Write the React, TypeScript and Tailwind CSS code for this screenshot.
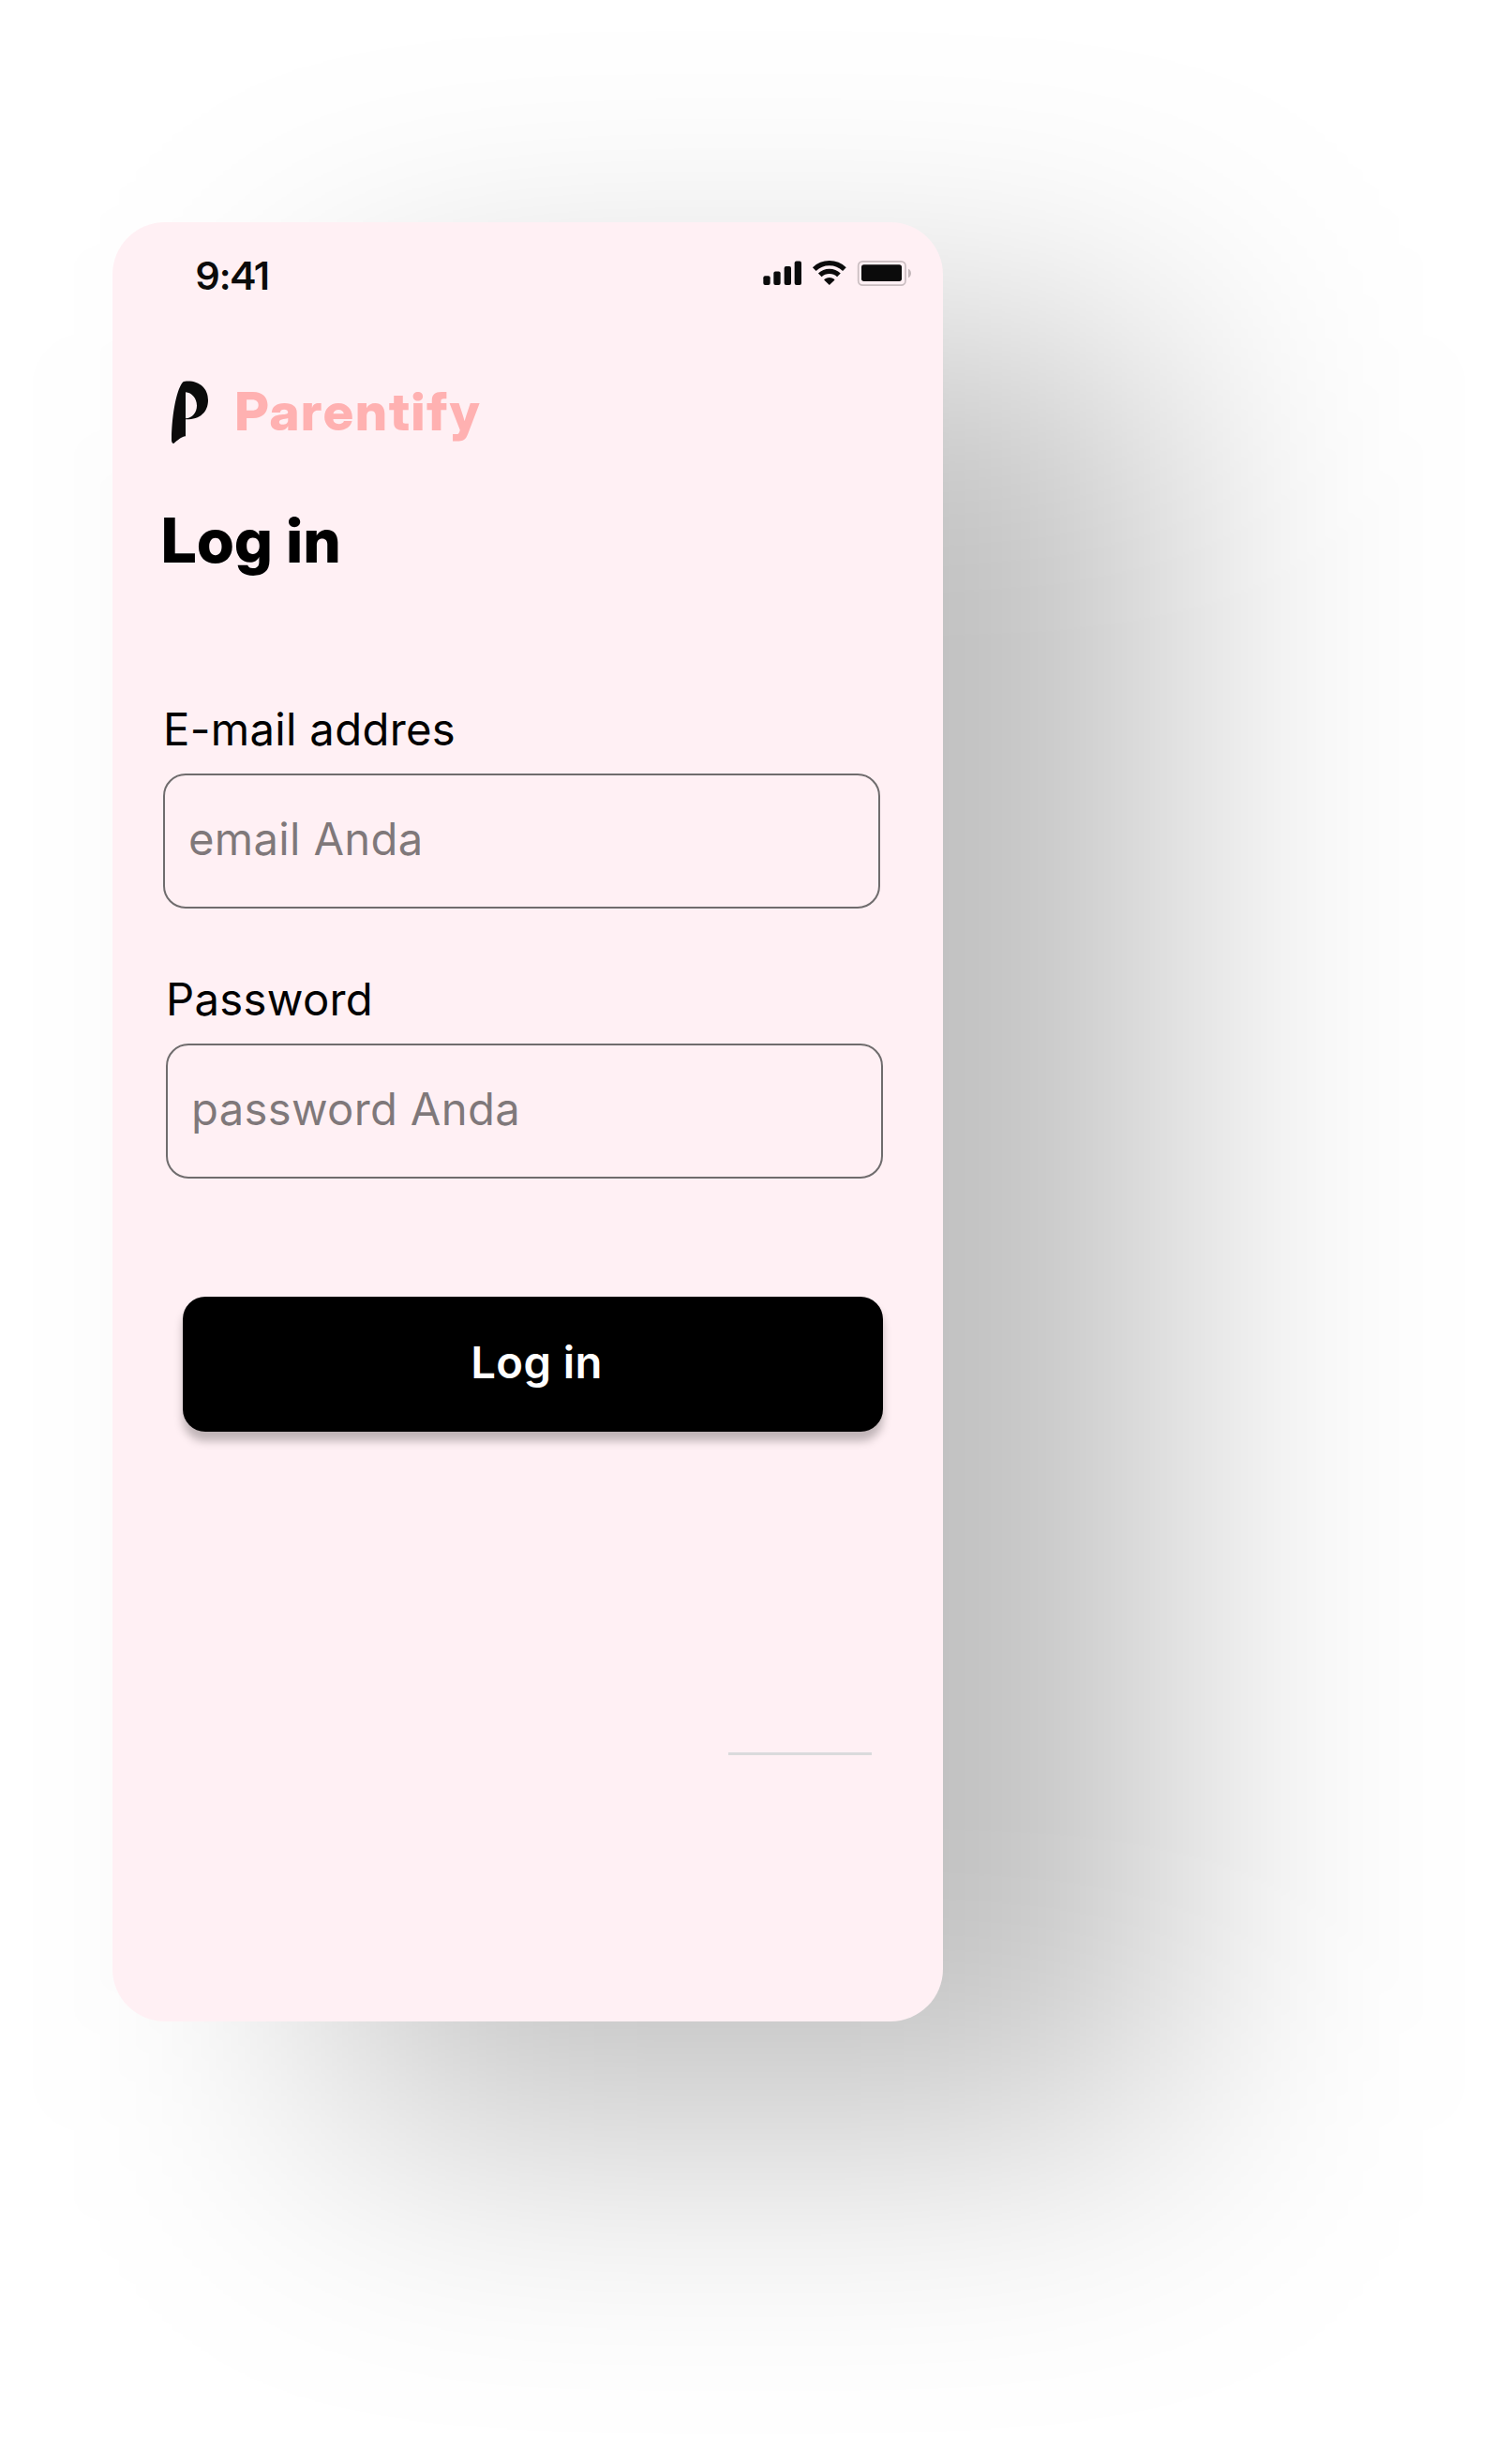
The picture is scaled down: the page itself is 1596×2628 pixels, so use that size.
function StatusIcons() {
  return (
    <svg className="h-[30px] w-[160px]" viewBox="99 168 480 90" fill="#0b0b0b">
      <rect x="103" y="223" width="22" height="29" rx="6" />
      <rect x="136" y="208.500" width="22" height="43.500" rx="6" />
      <rect x="170" y="192" width="22" height="60" rx="6" />
      <rect x="203" y="175.500" width="22" height="76.500" rx="6" />
      <g fill="none" stroke="#0b0b0b" strokeWidth="16">
        <path d="M266.300 201.200A70 70 0 0 1 362.700 201.200" />
        <path d="M284.200 220.100A44 44 0 0 1 344.800 220.100" />
      </g>
      <path d="M314.500 252L298 236.500Q297 234.500 299 233.500A24 24 0 0 1 330 233.500Q332 234.500 331 236.500Z" />
      <rect x="407" y="176.500" width="151" height="76" rx="14" fill="none" stroke="#0b0b0b" strokeOpacity="0.22" strokeWidth="5" />
      <rect x="417" y="187" width="129" height="53" rx="8" />
      <path d="M567 200C573 203 576 208 576 214.500S573 226 567 229Z" fillOpacity="0.24" />
    </svg>
  );
}

function Logo() {
  return (
    <svg className="h-[67px] w-[39px]" viewBox="99 77 117 201" fill="#0b0b0b" fillRule="evenodd">
      <path d="M142 79C186 75 216 100 216 139C216 178 189 202 144 201V255C130 256 118 269 107 277C102 280 99 274 99 267C99 200 112 112 134 83Q137 79 142 79ZM144 114V198C166 196 180 178 180 157C180 134 164 115 144 114Z" />
    </svg>
  );
}

function Field({ label, hint }: { label: string; hint: string }) {
  return (
    <div className="w-[765px] text-[47.260px] leading-[50px] tracking-[0.300px] whitespace-nowrap">
      <div className="h-[72px] text-black">{label}</div>
      <div className="flex h-[144px] items-center rounded-[24px] border-2 border-[#6f6c6d] pb-[4px] pl-[25px] text-black/50">
        {hint}
      </div>
    </div>
  );
}

export default function App() {
  return (
    <main className="h-[2628px] w-[1596px] overflow-hidden bg-white pt-[237px] pl-[120px] font-['Inter',sans-serif]">
      <div className="relative h-[1918.500px] w-[886px]">
        <div className="absolute top-[118px] left-[236px] h-full w-full rounded-[56px] bg-black/25 blur-[150px]" />
        <section className="relative flex h-full flex-col rounded-[56px] bg-[#fff0f4]">
          <header className="flex h-[83px] justify-between pt-[33px] pr-[33px] pl-[89px]">
            <div className="font-['Inter_Display','Inter',sans-serif] text-[41.500px] leading-[49px] font-semibold tracking-[1px] text-[#0b0b0b]">
              9:41
            </div>
            <div className="pt-[6px]">
              <StatusIcons />
            </div>
          </header>
          <div className="mt-[86px] flex h-[67px] items-start pl-[63px]">
            <Logo />
            <div className="ml-[28.500px] font-['Inter_Display','Inter',sans-serif] text-[56.500px] leading-[65px] font-extrabold tracking-[1.750px] text-[#ffb1b1]">
              Parentify
            </div>
          </div>
          <h1 className="mt-[63px] pl-[52px] font-['Inter_Display','Inter',sans-serif] text-[66px] leading-[80px] font-extrabold tracking-[0.900px] text-black">
            Log in
          </h1>
          <div className="mt-[137px] pl-[54px]">
            <Field label="E-mail addres" hint="email Anda" />
          </div>
          <div className="mt-[72px] pl-[57px]">
            <Field label="Password" hint="password Anda" />
          </div>
          <button className="mt-[126px] ml-[75px] flex h-[144px] w-[747px] items-center justify-center rounded-[24px] bg-black pb-[4px] pl-[8px] text-[47.260px] leading-[50px] font-semibold tracking-[0.400px] text-white shadow-[0_9.450px_9.450px_rgba(0,0,0,0.25)]">
            Log in
          </button>
          <hr className="mt-[342px] ml-[657px] h-[3px] w-[153px] border-0 bg-[#dadadc]" />
        </section>
      </div>
    </main>
  );
}
